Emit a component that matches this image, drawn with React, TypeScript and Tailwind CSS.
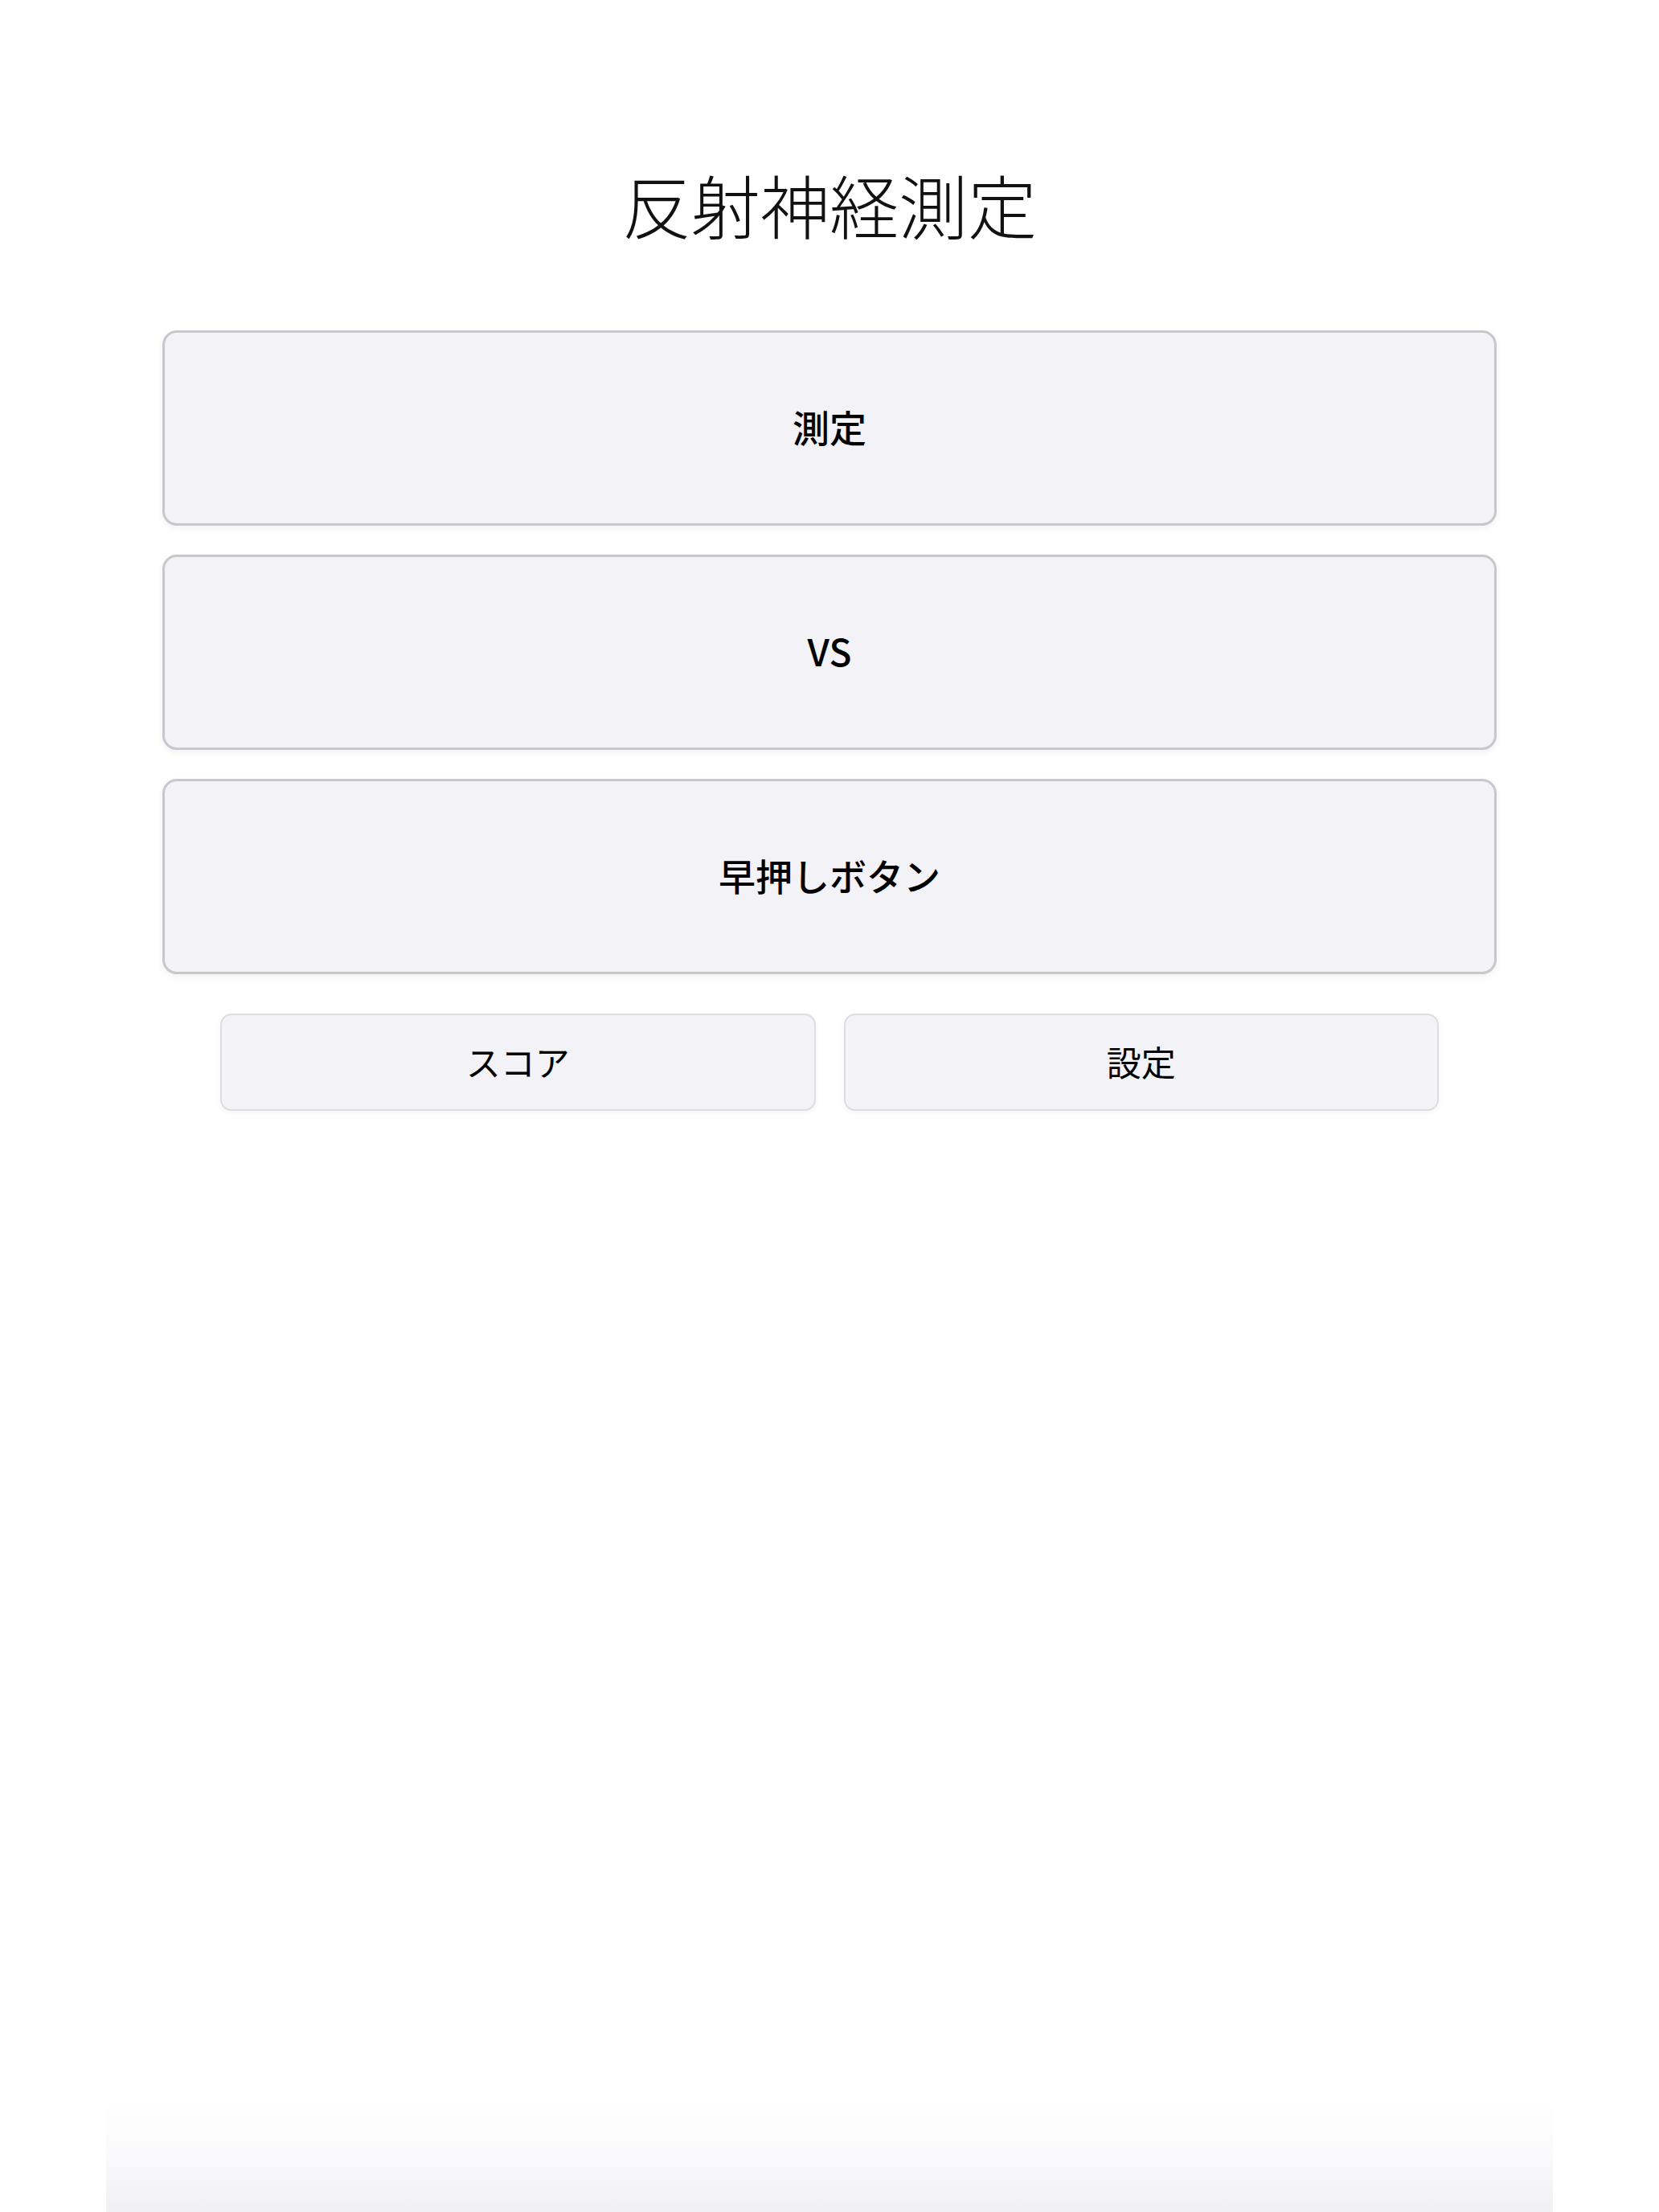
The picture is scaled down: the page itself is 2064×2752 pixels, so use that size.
import React from 'react';

const jp = "font-['Noto_Sans_CJK_JP','Noto_Sans',sans-serif]";

const MainButton = ({ label }: { label: string }) => (
  <button
    className={`w-full h-[243px] pb-[5px] flex items-center justify-center bg-[#f2f2f7] border-[3px] border-[#c8c8cc] rounded-[18px] shadow-[0_3px_8px_rgba(0,0,0,0.06)] text-[46px] font-medium text-black ${jp}`}
  >
    {label}
  </button>
);

const SubButton = ({ label }: { label: string }) => (
  <button
    className={`flex-1 h-[121px] pb-[3px] flex items-center justify-center bg-[#f2f2f7] border-2 border-[#dedee2] rounded-[14px] shadow-[0_2px_6px_rgba(0,0,0,0.05)] text-[43px] font-normal text-black ${jp}`}
  >
    {label}
  </button>
);

export default function App() {
  return (
    <div className={`min-h-screen bg-white flex flex-col ${jp}`}>
      <div className="flex flex-col px-[202px] pt-[202px]">
        <h1 className="text-center text-[86px] leading-[1.2] font-light text-[#111] tracking-normal">
          反射神経測定
        </h1>

        <div className="flex flex-col gap-[36px] mt-[106px]">
          <MainButton label="測定" />
          <MainButton label="VS" />
          <MainButton label="早押しボタン" />
        </div>

        <div className="flex gap-[35px] mx-[72px] mt-[49px]">
          <SubButton label="スコア" />
          <SubButton label="設定" />
        </div>
      </div>

      <div className="flex-1" />

      {/* faint blurred strip at the bottom edge */}
      <div className="mx-[132px] h-[140px] bg-gradient-to-b from-white via-[#fafafc] to-[#f0f0f3]" />
    </div>
  );
}
